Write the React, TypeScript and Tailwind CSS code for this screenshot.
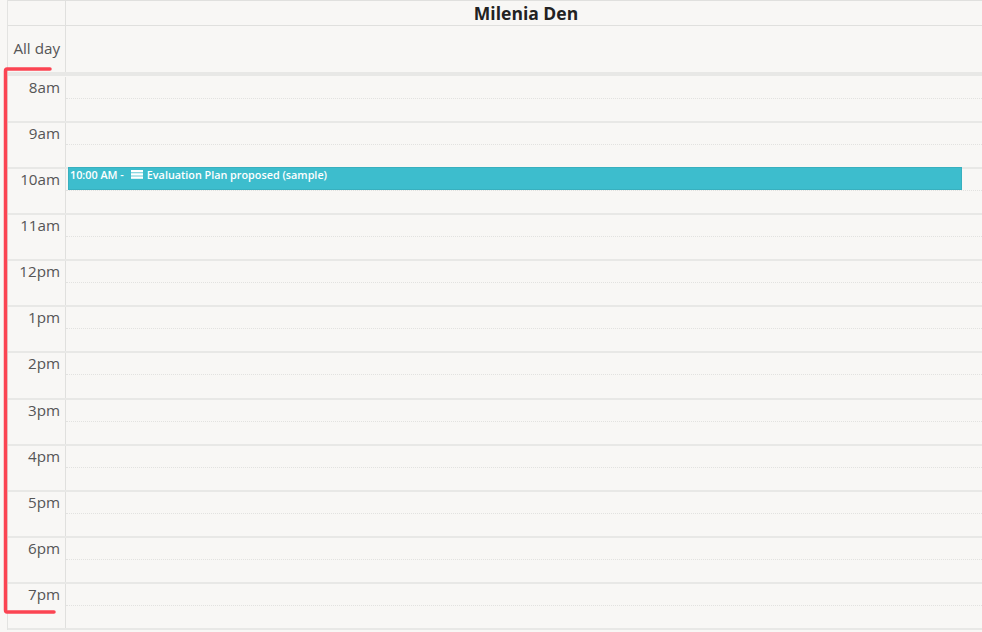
const hours = ["8am","9am","10am","11am","12pm","1pm","2pm","3pm","4pm","5pm","6pm","7pm"];

export default function App() {
  return (
    <div className="relative w-[982px] h-[632px] overflow-hidden bg-[#f8f7f5] text-[#555]" style={{ fontFamily: '"Open Sans", sans-serif' }}>
      <div className="ml-[7px] border-l border-[#e3e3e1]">
        {/* Header */}
        <div className="flex h-[24px] border-t border-b border-[#e0e0de] box-content">
          <div className="w-[58px] shrink-0 border-r border-[#e0e0de]" />
          <div className="flex-1 pl-[4px] text-center text-[17.5px] leading-[24px] font-bold text-[#222]">Milenia Den</div>
        </div>
        {/* All day */}
        <div className="flex h-[46px] border-b-4 border-[#e8e8e6] box-content">
          <div className="w-[58px] shrink-0 border-r border-[#e0e0de] text-right pr-[5px] pt-[12px] text-[15.2px] leading-[20px]">All day</div>
          <div className="flex-1" />
        </div>
        {/* Time rows */}
        <div className="relative pt-[0.5px]">
          {hours.map((h) => (
            <div key={h} className="flex h-[46.17px] border-b-2 border-[#e8e8e6]">
              <div className="w-[58px] shrink-0 border-r border-[#e0e0de] text-right pr-[5px] text-[15.2px] leading-[20px]">{h}</div>
              <div className="flex-1">
                <div className="h-[22px] border-b border-dotted border-[#e2e2e0]" />
              </div>
            </div>
          ))}
          {/* Event */}
          <div className="absolute left-[60px] top-[91px] w-[894px] h-[23px] bg-[#3dbdcd] border border-[#38b0bf] pl-[1px] flex items-start gap-[6px] text-white text-[10.8px] leading-[14px] font-semibold whitespace-nowrap">
            <span className="mr-px">10:00 AM -</span>
            <svg width="12" height="9" viewBox="0 0 12 9" className="mt-[2px] shrink-0" fill="#fff">
              <rect x="0" y="0" width="12" height="2.400" />
              <rect x="0" y="3.200" width="12" height="2.400" />
              <rect x="0" y="6.400" width="12" height="2.400" />
            </svg>
            <span className="-ml-[2px]">Evaluation Plan proposed (sample)</span>
          </div>
        </div>
      </div>
      {/* Hand-drawn annotation */}
      <svg className="absolute left-0 top-0" width="982" height="632" fill="none">
        <path d="M50 69 H7 Q5.500 69 5.500 71 V610 Q5.500 612 7 612 H54" stroke="#fb4452" strokeWidth="3.500" strokeLinecap="round" />
      </svg>
    </div>
  );
}
